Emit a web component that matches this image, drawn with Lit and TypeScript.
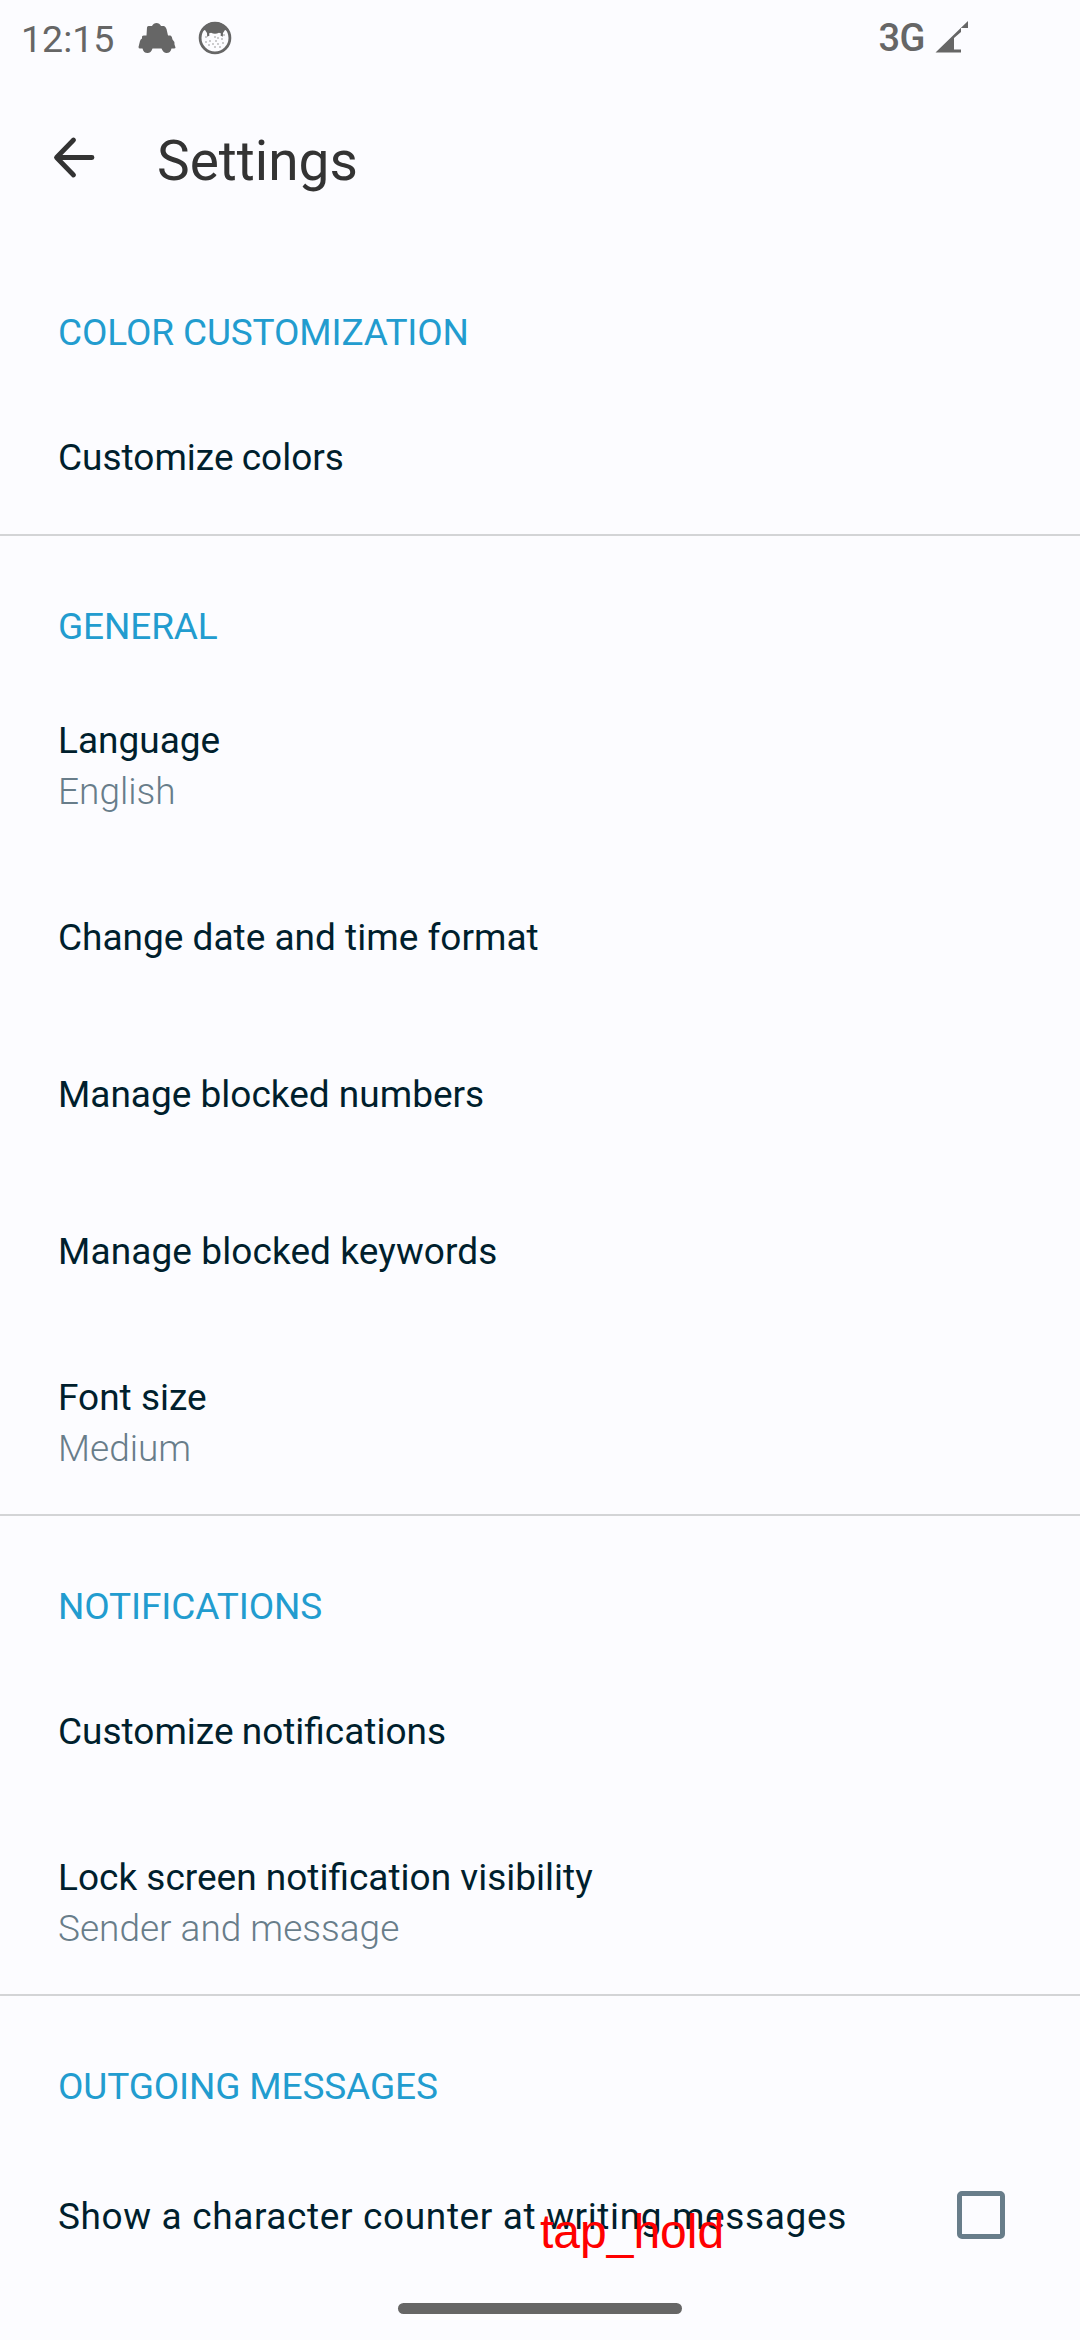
import { LitElement, html, css, svg, nothing } from "lit";
import { customElement } from "lit/decorators.js";

interface Item {
  label: string;
  summary?: string;
  checkbox?: boolean;
  fit?: "tight" | "loose";
}
interface Section {
  title: string;
  items: Item[];
}

const SECTIONS: Section[] = [
  { title: "COLOR CUSTOMIZATION", items: [{ label: "Customize colors", fit: "tight" }] },
  {
    title: "GENERAL",
    items: [
      { label: "Language", summary: "English" },
      { label: "Change date and time format" },
      { label: "Manage blocked numbers" },
      { label: "Manage blocked keywords", fit: "loose" },
      { label: "Font size", summary: "Medium" },
    ],
  },
  {
    title: "NOTIFICATIONS",
    items: [
      { label: "Customize notifications", fit: "tight" },
      { label: "Lock screen notification visibility", summary: "Sender and message" },
    ],
  },
  {
    title: "OUTGOING MESSAGES",
    items: [{ label: "Show a character counter at writing messages", checkbox: true }],
  },
];

@customElement("status-bar")
class StatusBar extends LitElement {
  static styles = css`
    :host {
      display: flex;
      align-items: flex-start;
      height: 80px;
      box-sizing: border-box;
      padding: 17px 111px 0 21px;
      color: #666;
    }
    .clock {
      width: 117px;
      font-size: 37.500px;
      line-height: 44px;
    }
    .car { width: 38px; height: 44px; }
    .face { width: 36px; height: 44px; margin-left: 21px; }
    .net {
      margin-left: auto;
      font-size: 38px;
      font-weight: 500;
      line-height: 42px;
      letter-spacing: -0.5px;
    }
    .signal { width: 34px; height: 44px; margin-left: 10px; }
    svg { display: block; }
  `;
  render() {
    const dots = [
      [9, 20], [13, 24], [9, 25], [19, 24], [21, 21], [25, 22], [27, 18],
      [18, 20], [16, 27], [21, 27], [26, 26], [12, 28], [18, 30], [23, 30],
    ];
    return html`
      <div class="clock">12:15</div>
      <svg class="car" viewBox="0 0 38 44" fill="#666">
        <path d="M9 10.500Q9 9 10.500 9H14Q15.500 6 18.500 6Q21.500 6 23 9H26Q27.500 9.500 28.500 12L30 18.500H32.500Q34 19 34.500 22.500Q36.500 24 36.500 27.500L37.500 30.500Q37.500 31.500 36 31.500H33.500Q32.500 36 28.500 36Q25.500 36 23.500 31.500H14.500Q13 36 9.500 36Q5.500 36 4.500 31.500H2Q.5 31.500 .5 30L2 24Q2.500 22 4 21.500V19.500Q4.500 18.500 6 18.500H8.500Z" />
      </svg>
      <svg class="face" viewBox="0 0 36 44">
        <circle cx="18" cy="21" r="14.900" fill="none" stroke="#666" stroke-width="2.800" />
        <path d="M4.500 14Q9 5 18 5Q27 5 31.500 14L28 13L26 16L25.800 19.800L23.500 18.500L24 16.500L22 15.800Q18 17.800 14 15.800L12 16.500L12.500 18.500L10.200 19.800L10 16L8 13Z" fill="#666" />
        ${dots.map(([x, y]) => svg`<circle cx=${x} cy=${y} r=".7" fill="#777" />`)}
      </svg>
      <div class="net">3G</div>
      <svg class="signal" viewBox="0 0 34 44" fill="#666">
        <path d="M33 4V11H26V15L19 21V32.500H26V35.500H0.500Z" />
      </svg>
    `;
  }
}

@customElement("settings-row")
class SettingsRow extends LitElement {
  static properties = { item: { attribute: false } };
  declare item: Item;
  static styles = css`
    :host { display: block; }
    .row {
      display: flex;
      justify-content: space-between;
      box-sizing: border-box;
      height: 157px;
      padding: 57px 75px 0 58px;
      font-size: 37px;
      line-height: 44px;
      color: #001f2d;
      white-space: nowrap;
    }
    .double { height: 186px; padding-top: 46px; }
    .check { padding-top: 58px; }
    .check .label { letter-spacing: 0.63px; padding-top: 4px; }
    .tight { word-spacing: -1px; }
    .loose { letter-spacing: 0.1px; }
    .summary {
      margin-top: 3px;
      line-height: 51px;
      font-weight: 300;
      color: #687d8a;
    }
    .box {
      box-sizing: border-box;
      width: 48px;
      height: 48px;
      border: 5px solid #687d8a;
      border-radius: 5px;
    }
  `;
  render() {
    const { label, summary, checkbox, fit } = this.item;
    return html`<div class="row ${summary ? "double" : ""} ${checkbox ? "check" : ""}">
      <div class="text">
        <div class="label ${fit ?? ""}">${label}</div>
        ${summary ? html`<div class="summary">${summary}</div>` : nothing}
      </div>
      ${checkbox ? html`<div class="box" role="checkbox" aria-checked="false"></div>` : nothing}
    </div>`;
  }
}

@customElement("app-root")
class AppRoot extends LitElement {
  static styles = css`
    :host {
      display: block;
      position: relative;
      width: 1080px;
      height: 2340px;
      overflow: hidden;
      background: #fcfcff;
      font-family: Roboto, "Liberation Sans", sans-serif;
    }
    .appbar {
      display: flex;
      box-sizing: border-box;
      height: 162px;
      padding: 49px 0 0 52px;
      color: #333;
    }
    .back { width: 44px; height: 56px; }
    .heading {
      margin: 0 0 0 61px;
      font-size: 55px;
      line-height: 64px;
      font-weight: 400;
    }
    .section { border-bottom: 2px solid #d3d4d6; }
    .section:last-child { border-bottom: 0; }
    .section settings-row:last-child { margin-bottom: -2px; }
    .title {
      box-sizing: border-box;
      height: 137px;
      margin: 0;
      padding: 69px 58px 0;
      font-size: 37px;
      line-height: 44px;
      font-weight: 400;
      letter-spacing: -0.13px;
      color: #229ccf;
    }
    .gesture {
      position: absolute;
      left: 398px;
      top: 2303px;
      width: 284px;
      height: 11px;
      border-radius: 6px;
      background: #666;
    }
    .action {
      position: absolute;
      left: 540px;
      top: 2205px;
      font: 48px/54px "Liberation Sans", sans-serif;
      color: #f00;
    }
  `;
  render() {
    return html`
      <status-bar></status-bar>
      <header class="appbar">
        <svg class="back" viewBox="0 0 44 56" fill="none" stroke="#333" stroke-width="4.800" stroke-linecap="round" stroke-linejoin="round">
          <path d="M40 28.500H5M21.500 11L4.500 28.500L21.500 46" />
        </svg>
        <h1 class="heading">Settings</h1>
      </header>
      <main>
        ${SECTIONS.map(
          (s) => html`<section class="section">
            <h2 class="title">${s.title}</h2>
            ${s.items.map((i) => html`<settings-row .item=${i}></settings-row>`)}
          </section>`
        )}
      </main>
      <div class="gesture"></div>
      <div class="action">tap_hold</div>
    `;
  }
}
